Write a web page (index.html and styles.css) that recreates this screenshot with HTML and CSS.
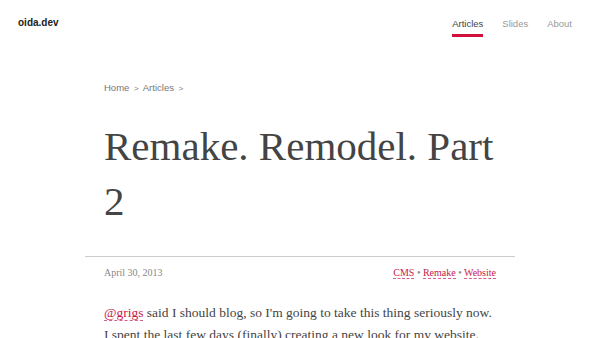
FILE: index.html
```html
<!DOCTYPE html>
<html lang="en">
<head>
  <meta charset="UTF-8">
  <meta name="viewport" content="width=device-width, initial-scale=1">
  <title>Remake. Remodel. Part 2 - oida.dev</title>
  <link rel="stylesheet" href="styles.css">
</head>

<body>

  <header class="site-header">
    <a class="logo" href="#">oida.dev</a>
    <nav class="main-nav">
      <a href="#" class="active">Articles</a>
      <a href="#">Slides</a>
      <a href="#">About</a>
    </nav>
  </header>

  <main>
    <div class="breadcrumbs">
      <a href="#">Home</a> <span>&gt;</span> <a href="#">Articles</a> <span>&gt;</span>
    </div>

    <h1 class="post-title">Remake. Remodel. Part 2</h1>

    <div class="post-meta">
      <time>April 30, 2013</time>
      <div class="tags">
        <a href="#">CMS</a> &bull; <a href="#">Remake</a> &bull; <a href="#">Website</a>
      </div>
    </div>

    <article class="post-body">
      <p><a href="#">@grigs</a> said I should blog, so I'm going to take this thing seriously now.
      I spent the last few days (finally) creating a new look for my website.</p>
    </article>
  </main>

</body>
</html>
```

FILE: styles.css
```css
* { margin: 0; padding: 0; box-sizing: border-box; }
body { font-family: 'Liberation Sans', Arial, sans-serif; background: #fff; color: #444; }
a { text-decoration: none; color: inherit; }

.site-header { display: flex; justify-content: space-between; align-items: flex-start; padding: 18px 28px 0 18px; height: 50px; }
.logo { font-size: 10px; font-weight: bold; color: #222; margin-top: -1px; }
.main-nav { display: flex; gap: 19px; }
.main-nav a { font-size: 9.5px; color: #999; padding-bottom: 5px; border-bottom: 3px solid transparent; }
.main-nav a.active { color: #444; border-bottom-color: #d0103a; }

main { width: 430px; margin: 0 auto; }
.breadcrumbs { padding: 32px 19px 0; font-size: 9.5px; color: #777; }
.breadcrumbs span { margin: 0 2px; font-size: 8px; }

.post-title { font-family: 'Liberation Serif', serif; font-weight: normal; font-size: 41px; line-height: 55px; color: #444; padding: 26px 0 27px 19px; }

.post-meta { border-top: 1px solid #ccc; display: flex; justify-content: space-between; padding: 10px 19px 0; font-family: 'Liberation Serif', serif; font-size: 10px; }
.post-meta time { color: #888; }
.tags { color: #888; }
.tags a { color: #c8184a; border-bottom: 1px dashed #d4608a; }

.post-body { padding: 24px 16px 0 19px; font-family: 'Liberation Serif', serif; font-size: 13.5px; line-height: 22px; color: #444; }
.post-body a { color: #c8184a; border-bottom: 1px dashed #d4608a; }
```
